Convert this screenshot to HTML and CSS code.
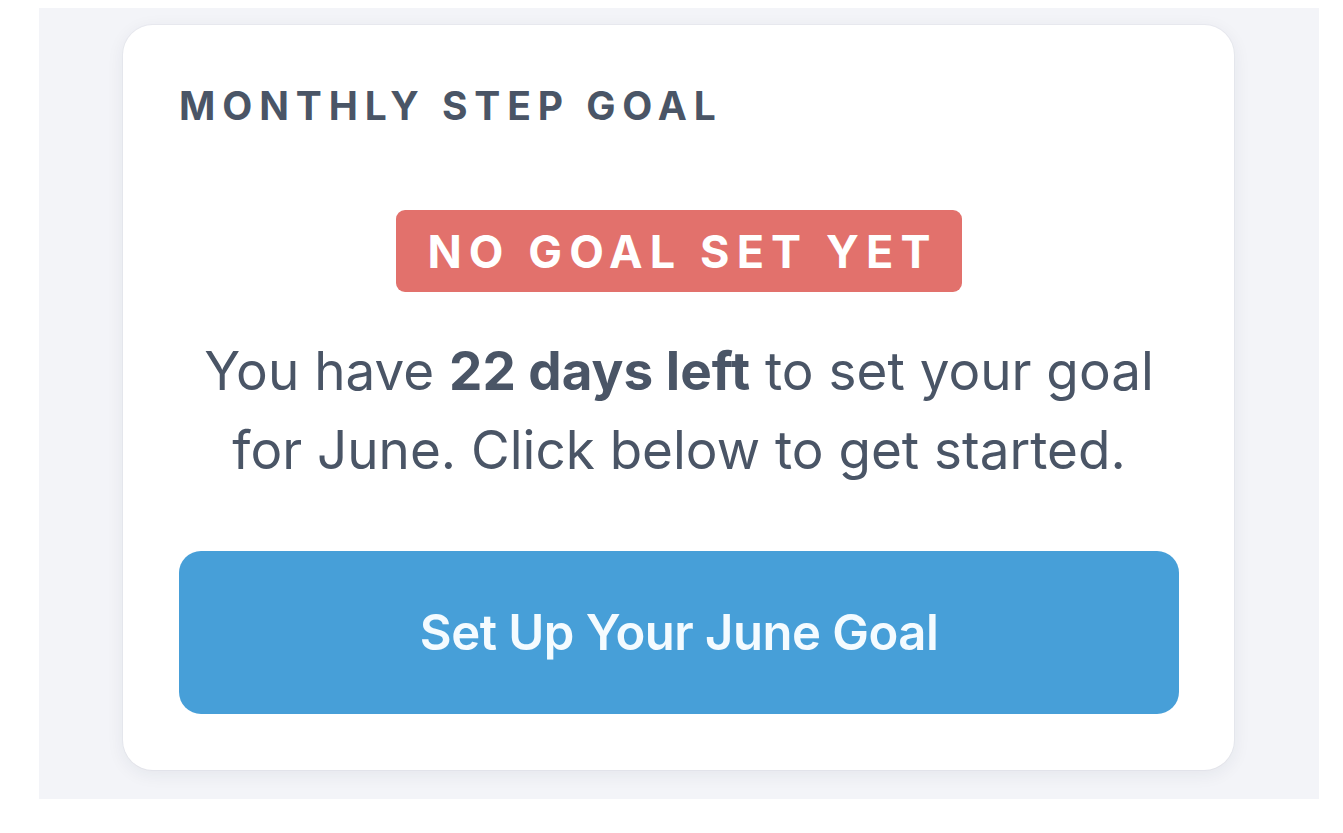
FILE: index.html
```html
<!DOCTYPE html>
<html>
<head>
<meta charset="utf-8">
<link rel="stylesheet" href="styles.css">
</head>
<body>
<div class="panel">
  <div class="card">
    <h2 class="title">MONTHLY STEP GOAL</h2>
    <div class="badge-row"><span class="badge">NO GOAL SET YET</span></div>
    <p class="message">You have <strong>22 days left</strong> to set your goal<br>for June. Click below to get started.</p>
    <button class="cta">Set Up Your June Goal</button>
  </div>
</div>
</body>
</html>
```
FILE: styles.css
```css
html, body {
  margin: 0;
  padding: 0;
  background: #ffffff;
}
body {
  padding: 8px 0 0 39px;
  font-family: Inter, "Noto Sans", sans-serif;
}
.panel {
  width: 1280px;
  height: 791px;
  box-sizing: border-box;
  background: #f3f4f8;
  padding: 17px 0 0 84px;
}
.card {
  width: 1111px;
  height: 745px;
  box-sizing: border-box;
  background: #ffffff;
  border-radius: 30px;
  box-shadow: 0 4px 18px rgba(30, 40, 70, 0.07), 0 0 0 1px rgba(30, 40, 70, 0.03);
  padding: 61px 55px 56px 56px;
  display: flex;
  flex-direction: column;
}
.title {
  margin: 0;
  font-size: 39px;
  line-height: 40px;
  font-weight: 700;
  letter-spacing: 6.9px;
  color: #4a5566;
}
.badge-row {
  display: flex;
  justify-content: center;
  margin-top: 84px;
}
.badge {
  display: inline-flex;
  align-items: center;
  justify-content: center;
  width: 566px;
  height: 82px;
  box-sizing: border-box;
  background: #e2716c;
  color: #ffffff;
  border-radius: 9px;
  font-size: 45px;
  font-weight: 700;
  letter-spacing: 7.1px;
  padding-left: 7px;
}
.message {
  margin: 40px 0 0 0;
  text-align: center;
  font-size: 53px;
  line-height: 79px;
  font-weight: 400;
  color: #4a5566;
}
.message strong {
  font-weight: 700;
}
.cta {
  margin-top: 61px;
  height: 163px;
  width: 1000px;
  border: none;
  border-radius: 22px;
  background: #479fd8;
  color: #f4fbff;
  font-family: Inter, "Noto Sans", sans-serif;
  font-size: 49px;
  font-weight: 600;
  letter-spacing: -0.5px;
  cursor: pointer;
}
```
